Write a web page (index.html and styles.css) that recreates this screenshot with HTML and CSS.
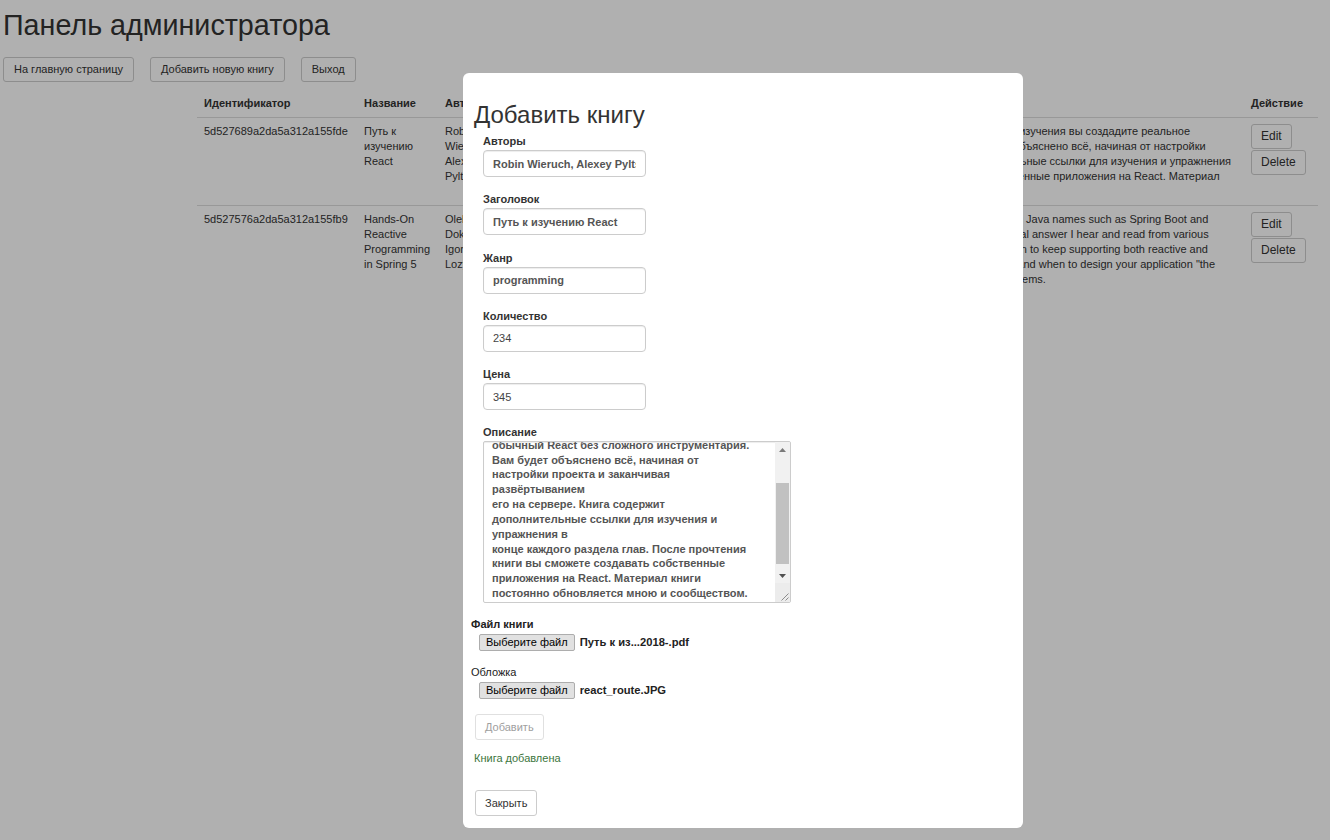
FILE: index.html
```html
<!DOCTYPE html>
<html lang="ru">
<head>
<meta charset="utf-8">
<title>Панель администратора</title>
<link rel="stylesheet" href="styles.css">
</head>
<body>
<div class="page">
  <h1 class="page-title">Панель администратора</h1>
  <div class="toolbar">
    <button class="btn btn-top">На главную страницу</button>
    <button class="btn btn-top">Добавить новую книгу</button>
    <button class="btn btn-top">Выход</button>
  </div>
  <table class="books">
    <colgroup>
      <col class="c-id"><col class="c-title"><col class="c-auth"><col class="c-genre"><col class="c-price"><col class="c-desc"><col class="c-act">
    </colgroup>
    <thead>
      <tr><th>Идентификатор</th><th>Название</th><th>Авторы</th><th>Жанр</th><th>Цена</th><th>Описание</th><th>Действие</th></tr>
    </thead>
    <tbody>
      <tr>
        <td>5d527689a2da5a312a155fde</td>
        <td>Путь к изучению React</td>
        <td>Robin Wieruch, Alexey Pyltsyn</td>
        <td>programming</td>
        <td>345</td>
        <td class="desc">
          <span class="ln">Эта книга «Путь к изучению React» научит вас основам React. В процессе изучения вы создадите реальное</span>
          <span class="ln">приложение на обычный React без сложного инструментария. Вам будет объяснено всё, начиная от настройки</span>
          <span class="ln">и заканчивая развёртыванием его на сервере. Книга содержит дополнительные ссылки для изучения и упражнения</span>
          <span class="ln">конце каждой главы. После прочтения книги вы сможете создавать собственные приложения на React. Материал</span>
          <span class="ln">книги постоянно обновляется мною и сообществом.</span>
        </td>
        <td><div class="actions"><button class="btn btn-row">Edit</button><button class="btn btn-row">Delete</button></div></td>
      </tr>
      <tr>
        <td>5d527576a2da5a312a155fb9</td>
        <td>Hands-On Reactive Programming in Spring 5</td>
        <td>Oleh Dokuka, Igor Lozynskyi</td>
        <td>programming</td>
        <td>500</td>
        <td class="desc">
          <span class="ln">Reactive programming is today supported by many popular frameworks and big Java names such as Spring Boot and</span>
          <span class="ln">Spring Cloud. But why should we really care about reactive systems? The typical answer I hear and read from various</span>
          <span class="ln">sources is that they scale better. That is why the Spring Team made the decision to keep supporting both reactive and</span>
          <span class="ln">imperative stacks. This book helps you fully understand the reactive paradigm and when to design your application "the</span>
          <span class="ln">reactive way" to build elastic, resilient and fully responsive message-driven systems.</span>
        </td>
        <td><div class="actions"><button class="btn btn-row">Edit</button><button class="btn btn-row">Delete</button></div></td>
      </tr>
    </tbody>
  </table>
</div>

<div class="overlay"></div>

<div class="modal">
  <h3 class="modal-title">Добавить книгу</h3>
  <form class="book-form">
    <div class="field">
      <label>Авторы</label>
      <input class="inp inp-bold" type="text" value="Robin Wieruch, Alexey Pyltsyn">
    </div>
    <div class="field">
      <label>Заголовок</label>
      <input class="inp inp-bold" type="text" value="Путь к изучению React">
    </div>
    <div class="field">
      <label>Жанр</label>
      <input class="inp inp-bold" type="text" value="programming">
    </div>
    <div class="field">
      <label>Количество</label>
      <input class="inp" type="text" value="234">
    </div>
    <div class="field">
      <label>Цена</label>
      <input class="inp" type="text" value="345">
    </div>
    <div class="field field-last">
      <label>Описание</label>
      <div class="desc-box" role="textbox" aria-multiline="true">
        <div class="desc-view">
          <div class="desc-text">обычный React без сложного инструментария.
Вам будет объяснено всё, начиная от
настройки проекта и заканчивая
развёртыванием
его на сервере. Книга содержит
дополнительные ссылки для изучения и
упражнения в
конце каждого раздела глав. После прочтения
книги вы сможете создавать собственные
приложения на React. Материал книги
постоянно обновляется мною и сообществом.</div>
        </div>
        <div class="vscroll">
          <div class="sb-btn"><svg width="7" height="4" viewBox="0 0 7 4"><path d="M3.5 0L7 4H0Z" fill="#7a7a7a"/></svg></div>
          <div class="sb-track"><div class="sb-thumb"></div></div>
          <div class="sb-btn"><svg width="7" height="4" viewBox="0 0 7 4"><path d="M0 0H7L3.5 4Z" fill="#505050"/></svg></div>
          <div class="sb-corner"><svg width="15" height="18" viewBox="0 0 15 18"><path d="M13.5 9.5L6.5 16.5M13.5 13.5L10.5 16.5" stroke="#8c8c8c" stroke-width="1"/></svg></div>
        </div>
      </div>
    </div>
  </form>
  <div class="files">
    <div class="file-group">
      <div class="file-label file-label-bold">Файл книги</div>
      <div class="file-row"><span class="file-btn">Выберите файл</span><span class="file-name">Путь к из...2018-.pdf</span></div>
    </div>
    <div class="file-group">
      <div class="file-label">Обложка</div>
      <div class="file-row"><span class="file-btn">Выберите файл</span><span class="file-name">react_route.JPG</span></div>
    </div>
  </div>
  <button class="btn btn-md btn-disabled" disabled>Добавить</button>
  <p class="success">Книга добавлена</p>
  <button class="btn btn-md btn-close">Закрыть</button>
</div>
</body>
</html>
```

FILE: styles.css
```css
* { box-sizing: border-box; }

html, body {
  margin: 0;
  padding: 0;
}

body {
  font-family: "Liberation Sans", Arial, sans-serif;
  font-size: 11px;
  line-height: 15px;
  color: #333;
  background: #fff;
  width: 1330px;
  height: 840px;
  overflow: hidden;
}

.page {
  padding-top: 9px;
}

.page-title {
  margin: 0 0 15px 3px;
  font-size: 28.7px;
  line-height: 33px;
  font-weight: normal;
  color: #333;
}

.toolbar {
  display: flex;
  gap: 16px;
  padding-left: 3px;
}

.btn {
  font-family: "Liberation Sans", Arial, sans-serif;
  font-size: 11px;
  line-height: 15px;
  color: #333;
  background: #fff;
  border: 1px solid #ccc;
  border-radius: 3px;
  padding: 4px 9px;
  margin: 0;
}

.btn-top {
  padding: 4px 10px;
}

.btn-row {
  font-size: 12px;
}

.books {
  margin: 8px 0 0 197px;
  width: 1121px;
  table-layout: fixed;
  border-collapse: separate;
  border-spacing: 0;
}

.c-id { width: 160px; }
.c-title { width: 81px; }
.c-auth { width: 70px; }
.c-genre { width: 80px; }
.c-price { width: 41px; }
.c-desc { width: 615px; }
.c-act { width: 74px; }

.books th {
  text-align: left;
  font-weight: bold;
  padding: 6px 7px;
  white-space: nowrap;
}

.books td {
  vertical-align: top;
  padding: 6px 7px;
  border-top: 1px solid #ddd;
}

.ln {
  display: block;
  white-space: nowrap;
}

.actions {
  display: flex;
  flex-direction: column;
  align-items: flex-start;
  gap: 1px;
}

.overlay {
  position: fixed;
  inset: 0;
  background: rgba(0, 0, 0, 0.31);
}

.modal {
  position: absolute;
  left: 463px;
  top: 73px;
  width: 560px;
  background: #fff;
  border-radius: 6px;
  padding: 29px 11px 12px;
}

.modal-title {
  margin: 0 0 6px;
  font-size: 24px;
  line-height: 26px;
  font-weight: normal;
  color: #333;
}

.book-form {
  margin: 0 0 0 9px;
}

.field {
  margin-bottom: 15.25px;
}

.field-last {
  margin-bottom: 14px;
}

.field label {
  display: block;
  font-weight: bold;
  line-height: 15px;
  margin-bottom: 1px;
  color: #333;
}

.inp {
  display: block;
  width: 163px;
  height: 27px;
  border: 1px solid #ccc;
  border-radius: 4px;
  padding: 0 9px;
  font-family: "Liberation Sans", Arial, sans-serif;
  font-size: 11px;
  color: #444;
  background: #fff;
  box-shadow: inset 0 1px 1px rgba(0, 0, 0, 0.075);
  outline: none;
}

.inp-bold {
  font-weight: bold;
  color: #555;
}

.desc-box {
  display: flex;
  width: 308px;
  height: 162px;
  border: 1px solid #ccc;
  border-radius: 2px;
  background: #fff;
  overflow: hidden;
  box-shadow: inset 0 1px 1px rgba(0, 0, 0, 0.075);
}

.desc-view {
  flex: 1;
  overflow: hidden;
}

.desc-text {
  margin-top: -4.6px;
  padding: 0 8px;
  white-space: pre-line;
  font-weight: bold;
  font-size: 11px;
  line-height: 14.85px;
  color: #555;
}

.vscroll {
  width: 15px;
  display: flex;
  flex-direction: column;
  background: #f1f1f1;
}

.sb-btn {
  height: 15px;
  display: flex;
  align-items: center;
  justify-content: center;
}

.sb-track {
  flex: 1;
  padding: 26px 1px 0;
}

.sb-thumb {
  height: 81px;
  background: #c1c1c1;
}

.sb-corner {
  height: 19px;
  display: flex;
  align-items: flex-end;
  background: #ececec;
}

.files {
  margin-left: -3px;
}

.file-group + .file-group {
  margin-top: 14px;
}

.file-label {
  line-height: 15px;
  margin-bottom: 2px;
  color: #222;
}

.file-label-bold {
  font-weight: bold;
}

.file-row {
  display: flex;
  align-items: center;
  gap: 5px;
  padding-left: 8px;
}

.file-btn {
  display: inline-block;
  height: 17px;
  font-size: 11px;
  line-height: 15px;
  padding: 0 6px;
  color: #000;
  background: #e1e1e1;
  border: 1px solid #adadad;
  border-radius: 2px;
}

.file-name {
  font-size: 11.2px;
  font-weight: bold;
  color: #222;
}

.btn-md {
  display: block;
  line-height: 14px;
  padding: 5px 9px;
  margin-left: 1px;
}

.btn-disabled {
  margin-top: 15px;
  color: #a0a0a0;
  border-color: #e0e0e0;
}

.success {
  margin: 11px 0 0;
  line-height: 15px;
  color: #3c763d;
}

.btn-close {
  margin-top: 24px;
}
```
